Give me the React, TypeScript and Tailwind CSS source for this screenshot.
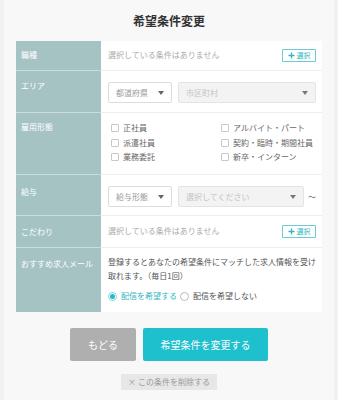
import React from "react";

// Small down-pointing caret used in the selects
const Caret = ({ color = "#666" }: { color?: string }) => (
  <svg width="6" height="4" viewBox="0 0 6 4" className="shrink-0">
    <path d="M0 0h6L3 4z" fill={color} />
  </svg>
);

const SelectButton = () => (
  <button className="flex h-[13px] w-[34px] items-center justify-center gap-[2px] rounded-[1px] border border-[#6ccbd2] bg-white text-[7px] leading-none text-[#2fb6c2]">
    <svg width="7" height="7" viewBox="0 0 7 7">
      <path d="M3.5 0.5v6M0.5 3.5h6" stroke="#2fb6c2" strokeWidth="1.3" />
    </svg>
    <span>選択</span>
  </button>
);

const Select = ({
  label,
  disabled,
  width,
}: {
  label: string;
  disabled?: boolean;
  width: string;
}) => (
  <div
    className={`flex h-[21px] items-center justify-between rounded-[2px] border pl-[7px] pr-[7px] text-[8px] ${width} ${
      disabled
        ? "border-[#e4e4e4] bg-[#f3f3f3] text-[#c4c4c4]"
        : "border-[#dcdcdc] bg-white text-[#999]"
    }`}
  >
    <span>{label}</span>
    <Caret color={disabled ? "#777" : "#666"} />
  </div>
);

const Checkbox = ({ label }: { label: string }) => (
  <label className="flex h-[14.5px] items-center gap-[4px] text-[8px] text-[#666]">
    <span className="h-[8px] w-[8px] shrink-0 rounded-[1px] border border-[#c8c8c8] bg-white" />
    <span>{label}</span>
  </label>
);

const Row = ({
  label,
  labelPad,
  height,
  last,
  children,
}: {
  label: string;
  labelPad: string;
  height: string;
  last?: boolean;
  children: React.ReactNode;
}) => (
  <div className={`flex ${height}`}>
    <div
      className={`w-[85px] shrink-0 bg-[#a6c3c4] pl-[5px] text-[8px] leading-[11px] text-white ${labelPad} ${
        last ? "" : "border-b border-[#cadcdd]"
      }`}
    >
      {label}
    </div>
    <div
      className={`min-w-0 flex-1 bg-white ${last ? "" : "border-b border-[#eeeeee]"}`}
    >
      {children}
    </div>
  </div>
);

export default function App() {
  return (
    <div className="flex min-h-[400px] justify-center bg-[#f1f1f1] font-['Noto_Sans_CJK_JP','Noto_Sans',sans-serif]">
      <div className="w-[330px] bg-[#f8f8f8] px-[12px] pb-[10px]">
        <h1 className="pt-[13px] text-center text-[12px] font-bold leading-[15px] text-[#333]">
          希望条件変更
        </h1>

        <div className="mt-[13px]">
          <Row label="職種" labelPad="pt-[8px]" height="h-[30px]">
            <div className="flex h-full items-center justify-between pb-[1px] pl-[7px] pr-[6px]">
              <span className="text-[8px] text-[#aaa]">選択している条件はありません</span>
              <SelectButton />
            </div>
          </Row>

          <Row label="エリア" labelPad="pt-[9px]" height="h-[42px]">
            <div className="flex gap-[6px] pl-[7px] pt-[11px]">
              <Select label="都道府県" width="w-[64px]" />
              <Select label="市区町村" width="w-[138px]" disabled />
            </div>
          </Row>

          <Row label="雇用形態" labelPad="pt-[8px]" height="h-[62px]">
            <div className="grid grid-cols-[110px_1fr] pl-[10px] pt-[8px]">
              <Checkbox label="正社員" />
              <Checkbox label="アルバイト・パート" />
              <Checkbox label="派遣社員" />
              <Checkbox label="契約・臨時・期間社員" />
              <Checkbox label="業務委託" />
              <Checkbox label="新卒・インターン" />
            </div>
          </Row>

          <Row label="給与" labelPad="pt-[11px]" height="h-[41px]">
            <div className="flex items-center gap-[6px] pl-[7px] pt-[11px]">
              <Select label="給与形態" width="w-[64px]" />
              <Select label="選択してください" width="w-[126px]" disabled />
              <span className="-ml-[2px] text-[8px] text-[#666]">〜</span>
            </div>
          </Row>

          <Row label="こだわり" labelPad="pt-[10px]" height="h-[32px]">
            <div className="flex h-full items-center justify-between pb-[1px] pl-[7px] pr-[6px]">
              <span className="text-[8px] text-[#aaa]">選択している条件はありません</span>
              <SelectButton />
            </div>
          </Row>

          <Row label="おすすめ求人メール" labelPad="pt-[10px]" height="h-[64px]" last>
            <div className="pl-[7px] pr-[6px] pt-[7px]">
              <p className="text-[8px] leading-[14px] text-[#555]">
                登録するとあなたの希望条件にマッチした求人情報を受け取れます。（毎日1回）
              </p>
              <div className="mt-[7px] flex h-[12px] items-center text-[8px]">
                <span className="flex items-center gap-[4px] text-[#2fb6c2]">
                  <span className="flex h-[9px] w-[9px] items-center justify-center rounded-full border border-[#7fd3d9] bg-white">
                    <span className="h-[5px] w-[5px] rounded-full bg-[#25bcc8]" />
                  </span>
                  配信を希望する
                </span>
                <span className="ml-[3px] flex items-center gap-[4px] text-[#555]">
                  <span className="h-[9px] w-[9px] rounded-full border border-[#bbb] bg-white" />
                  配信を希望しない
                </span>
              </div>
            </div>
          </Row>
        </div>

        <div className="mt-[16px] flex justify-center gap-[7px]">
          <button className="h-[33px] w-[66px] rounded-[2px] bg-[#afafaf] text-[10px] text-white">
            もどる
          </button>
          <button className="h-[33px] w-[125px] rounded-[2px] bg-[#1fc0ce] text-[10px] text-white">
            希望条件を変更する
          </button>
        </div>

        <div className="mt-[13px] flex justify-center">
          <button className="flex h-[16px] w-[96px] items-center justify-center gap-[2px] rounded-[1px] bg-[#e7e7e7] text-[8px] text-[#999]">
            <span>×</span>
            <span>この条件を削除する</span>
          </button>
        </div>
      </div>
    </div>
  );
}
